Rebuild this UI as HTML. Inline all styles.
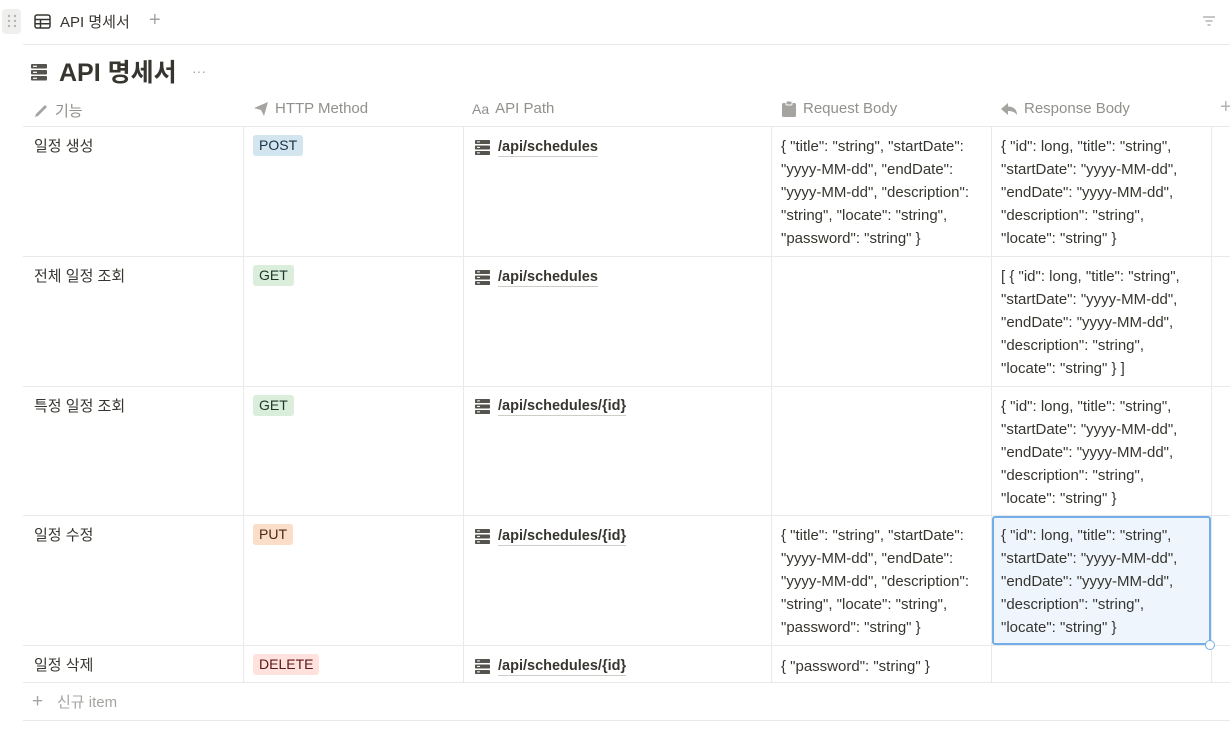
<!DOCTYPE html>
<html><head><meta charset="utf-8"><style>
*{margin:0;padding:0;box-sizing:border-box}
body{width:1230px;height:729px;overflow:hidden;background:#fff;font-family:"Liberation Sans","Noto Sans CJK KR",sans-serif;color:#37352f;position:relative;font-size:14px}
.a{position:absolute}
.hl{position:absolute;height:1px;background:#e9e9e7}
.vl{position:absolute;width:1px;background:#e9e9e7}
.t{position:absolute;line-height:23px;white-space:nowrap;font-size:15px}
.h{position:absolute;top:100px;color:#91908c;font-size:15px;white-space:nowrap;display:flex;align-items:center;gap:6px}
.b{position:absolute;height:21px;line-height:21px;padding:0 6px;border-radius:3px;font-size:14px}
.p{position:absolute;font-weight:bold;font-size:14.5px;display:flex;align-items:center;gap:8px;white-space:nowrap}
.p span{border-bottom:1px solid #cfcdc8;line-height:18px}
</style></head><body>
<div class="a" style="left:2px;top:9px;width:19px;height:25px;background:#efefed;border-radius:4px"></div>
<svg class="a" style="left:6px;top:13px" width="12" height="16"><g fill="#b5b4b0"><circle cx="3" cy="3" r="1.2"/><circle cx="9" cy="3" r="1.2"/><circle cx="3" cy="8" r="1.2"/><circle cx="9" cy="8" r="1.2"/><circle cx="3" cy="13" r="1.2"/><circle cx="9" cy="13" r="1.2"/></g></svg>
<svg class="a" style="left:34px;top:14px" width="17" height="15"><rect x="1" y="1" width="15" height="13" rx="2" fill="none" stroke="#37352f" stroke-width="1.5"/><path d="M1 5.5H16M1 9.7H16M6.5 5.5V14" stroke="#37352f" stroke-width="1.5"/></svg>
<div class="t" style="left:60px;top:11px;font-size:15px">API 명세서</div>
<div class="t" style="left:149px;top:9px;font-size:20px;color:#a5a4a0">+</div>
<svg class="a" style="left:1202px;top:15px" width="14" height="12"><path d="M1 2H13M3.5 6H10.5M5.5 10H8.5" stroke="#a5a4a0" stroke-width="1.3"/></svg>
<div class="hl" style="left:23px;top:44px;width:1207px"></div>
<svg class="a" style="left:30px;top:62px" width="18" height="20"><g fill="#55534e"><rect x="1" y="2" width="16" height="4.5" rx="1"/><rect x="1" y="8" width="16" height="4.5" rx="1"/><rect x="1" y="14" width="16" height="4.5" rx="1"/></g><g fill="#fff"><rect x="3" y="3.7" width="4" height="1.2"/><rect x="3" y="9.7" width="4" height="1.2"/><rect x="3" y="15.7" width="4" height="1.2"/></g></svg>
<div class="t" style="left:59px;top:57px;font-size:25px;font-weight:bold;line-height:32px">API 명세서</div>
<div class="t" style="left:192px;top:60px;color:#a5a4a0;font-size:14px">···</div>
<div class="h" style="left:33px"><svg width="16" height="16"><path d="M2 14L3 11L12 2L14 4L5 13Z" fill="#a5a4a0"/></svg>기능</div>
<div class="h" style="left:253px"><svg width="16" height="16"><path d="M1 7L15 1L11 15L8 9Z" fill="#a5a4a0"/></svg>HTTP Method</div>
<div class="h" style="left:472px"><span style="font-size:14px">Aa</span>API Path</div>
<div class="h" style="left:781px"><svg width="16" height="17"><rect x="1" y="3" width="14" height="14" rx="1.5" fill="#a5a4a0"/><rect x="5" y="1" width="6" height="4" rx="1" fill="#a5a4a0" stroke="#fff"/></svg>Request Body</div>
<div class="h" style="left:1000px"><svg width="18" height="14"><path d="M1 7L8 1V4.5C13 4.5 17 7 17 13C15 10 12 9 8 9V13Z" fill="#a5a4a0"/></svg>Response Body</div>
<div class="t" style="left:1220px;top:96px;font-size:20px;color:#b5b4b0">+</div>
<div class="hl" style="left:23px;top:126px;width:1207px"></div>
<div class="hl" style="left:23px;top:256px;width:1207px"></div>
<div class="hl" style="left:23px;top:386px;width:1207px"></div>
<div class="hl" style="left:23px;top:515px;width:1207px"></div>
<div class="hl" style="left:23px;top:645px;width:1207px"></div>
<div class="hl" style="left:23px;top:682px;width:1207px"></div>
<div class="hl" style="left:23px;top:720px;width:1207px"></div>
<div class="vl" style="left:243px;top:126px;height:556px"></div>
<div class="vl" style="left:463px;top:126px;height:556px"></div>
<div class="vl" style="left:771px;top:126px;height:556px"></div>
<div class="vl" style="left:991px;top:126px;height:556px"></div>
<div class="vl" style="left:1211px;top:126px;height:556px"></div>

<div class="t" style="left:34px;top:135px">일정 생성</div>
<div class="t" style="left:34px;top:265px">전체 일정 조회</div>
<div class="t" style="left:34px;top:395px">특정 일정 조회</div>
<div class="t" style="left:34px;top:524px">일정 수정</div>
<div class="t" style="left:34px;top:654px">일정 삭제</div>

<div class="b" style="left:253px;top:135px;background:#d3e5ef;color:#183347">POST</div>
<div class="b" style="left:253px;top:265px;background:#dbeddb;color:#1c3829">GET</div>
<div class="b" style="left:253px;top:395px;background:#dbeddb;color:#1c3829">GET</div>
<div class="b" style="left:253px;top:524px;background:#fadec9;color:#49290e">PUT</div>
<div class="b" style="left:253px;top:654px;background:#ffe2dd;color:#5d1715">DELETE</div>

<svg width="0" height="0" style="position:absolute"><defs><g id="srv"><g fill="#55534e"><rect x="0" y="0" width="15" height="4" rx="0.8"/><rect x="0" y="5.5" width="15" height="4" rx="0.8"/><rect x="0" y="11" width="15" height="4" rx="0.8"/></g><g fill="#fff"><rect x="2" y="1.4" width="3" height="1"/><rect x="2" y="6.9" width="3" height="1"/><rect x="2" y="12.4" width="3" height="1"/></g></g></defs></svg>
<div class="p" style="left:475px;top:138px"><svg width="15" height="15"><use href="#srv"/></svg><span>/api/schedules</span></div>
<div class="p" style="left:475px;top:268px"><svg width="15" height="15"><use href="#srv"/></svg><span>/api/schedules</span></div>
<div class="p" style="left:475px;top:397px"><svg width="15" height="15"><use href="#srv"/></svg><span>/api/schedules/{id}</span></div>
<div class="p" style="left:475px;top:527px"><svg width="15" height="15"><use href="#srv"/></svg><span>/api/schedules/{id}</span></div>
<div class="p" style="left:475px;top:657px"><svg width="15" height="15"><use href="#srv"/></svg><span>/api/schedules/{id}</span></div>

<div class="t" style="left:781px;top:135px">{ "title": "string", "startDate":<br>"yyyy-MM-dd", "endDate":<br>"yyyy-MM-dd", "description":<br>"string", "locate": "string",<br>"password": "string" }</div>
<div class="t" style="left:781px;top:524px">{ "title": "string", "startDate":<br>"yyyy-MM-dd", "endDate":<br>"yyyy-MM-dd", "description":<br>"string", "locate": "string",<br>"password": "string" }</div>
<div class="t" style="left:781px;top:655px">{ "password": "string" }</div>

<div class="t" style="left:1001px;top:135px">{ "id": long, "title": "string",<br>"startDate": "yyyy-MM-dd",<br>"endDate": "yyyy-MM-dd",<br>"description": "string",<br>"locate": "string" }</div>
<div class="t" style="left:1001px;top:265px">[ { "id": long, "title": "string",<br>"startDate": "yyyy-MM-dd",<br>"endDate": "yyyy-MM-dd",<br>"description": "string",<br>"locate": "string" } ]</div>
<div class="t" style="left:1001px;top:395px">{ "id": long, "title": "string",<br>"startDate": "yyyy-MM-dd",<br>"endDate": "yyyy-MM-dd",<br>"description": "string",<br>"locate": "string" }</div>
<div class="a" style="left:992px;top:516px;width:219px;height:129px;background:#eef5fd;border:2px solid #74aee8;border-radius:3px"></div>
<div class="t" style="left:1001px;top:524px">{ "id": long, "title": "string",<br>"startDate": "yyyy-MM-dd",<br>"endDate": "yyyy-MM-dd",<br>"description": "string",<br>"locate": "string" }</div>
<div class="a" style="left:1205px;top:640px;width:10px;height:10px;border:1.5px solid #74aee8;border-radius:50%;background:#fff"></div>

<div class="t" style="left:32px;top:690px;color:#a5a4a0;font-size:19px;line-height:23px">+</div>
<div class="t" style="left:57px;top:691px;color:#a5a4a0">신규 item</div>
</body></html>
